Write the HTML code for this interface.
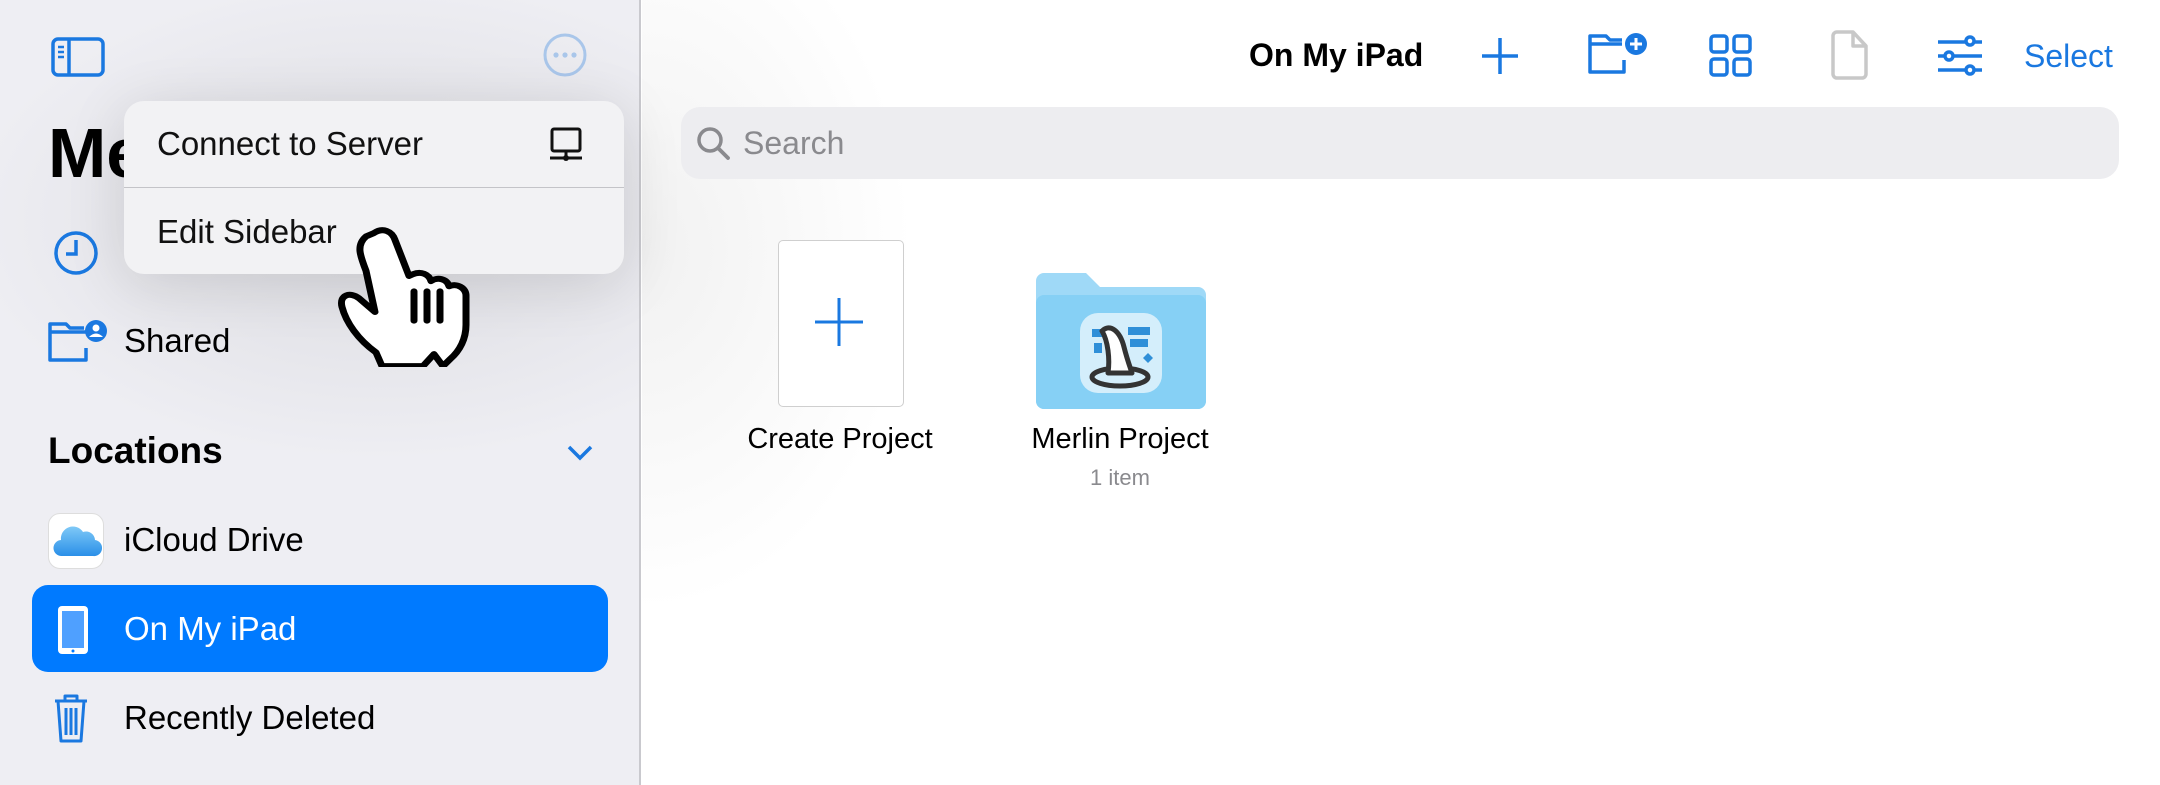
<!DOCTYPE html>
<html><head><meta charset="utf-8"><style>
*{margin:0;padding:0;box-sizing:border-box}
body{width:2160px;height:785px;overflow:hidden;background:#fff;font-family:"Liberation Sans",sans-serif;position:relative}
.a{position:absolute}
.t{position:absolute;white-space:nowrap;line-height:1}
</style></head><body>
<div class="a" style="left:0;top:0;width:641px;height:785px;background:radial-gradient(ellipse 520px 300px at 380px 220px,#dcdce1,#eeeef3 80%);border-right:2px solid #c9c9ce"></div>
<div class="a" style="left:642px;top:0;width:500px;height:785px;background:radial-gradient(ellipse 300px 400px at 0 250px,#f1f1f1,#fff 90%)"></div>

<svg class="a" style="left:50px;top:36px" width="56" height="42" viewBox="0 0 56 42"><rect x="3" y="3" width="50" height="36" rx="5" fill="none" stroke="#1a78e0" stroke-width="3.5"/><line x1="19" y1="3" x2="19" y2="39" stroke="#1a78e0" stroke-width="3.5"/><path d="M8 11h6M8 16h6M8 21h6" stroke="#1a78e0" stroke-width="2.5"/></svg>
<svg class="a" style="left:542px;top:32px" width="46" height="46"><circle cx="23" cy="23" r="20" fill="none" stroke="#a9c6ea" stroke-width="3"/><circle cx="14" cy="23" r="2.6" fill="#a9c6ea"/><circle cx="23" cy="23" r="2.6" fill="#a9c6ea"/><circle cx="32" cy="23" r="2.6" fill="#a9c6ea"/></svg>

<div class="t" style="left:48px;top:118px;font-size:70px;font-weight:bold">Me</div>
<svg class="a" style="left:52px;top:229px" width="48" height="48"><circle cx="24" cy="24" r="20" fill="none" stroke="#1a78e0" stroke-width="3.5"/><path d="M24 11v14h-10" fill="none" stroke="#1a78e0" stroke-width="3.5"/></svg>
<svg class="a" style="left:46px;top:318px" width="64" height="46"><path d="M4 14V6h16l4 4h14M4 14h38M4 14v28h36V30" fill="none" stroke="#1a78e0" stroke-width="3.5" stroke-linejoin="round"/><circle cx="50" cy="13" r="11" fill="#1a78e0"/><circle cx="50" cy="10" r="3.5" fill="#fff"/><path d="M43 19q7-7 14 0" fill="#fff"/></svg>
<div class="t" style="left:124px;top:324px;font-size:33px">Shared</div>

<div class="t" style="left:48px;top:432px;font-size:37px;font-weight:bold">Locations</div>
<svg class="a" style="left:566px;top:443px" width="28" height="18"><path d="M3 4l11 11 11-11" fill="none" stroke="#1a78e0" stroke-width="3.5"/></svg>

<div class="a" style="left:48px;top:513px;width:56px;height:56px;background:#fff;border-radius:12px;border:1px solid #ddd"></div>
<svg class="a" style="left:52px;top:522px" width="50" height="38"><path d="M10 34a8 8 0 0 1-1-16 12 12 0 0 1 22-8 9 9 0 0 1 12 8 8 8 0 0 1-2 16z" fill="url(#g)"/><defs><linearGradient id="g" x1="0" y1="0" x2="0" y2="1"><stop offset="0" stop-color="#7fc9f7"/><stop offset="1" stop-color="#2a8fe8"/></linearGradient></defs></svg>
<div class="t" style="left:124px;top:523px;font-size:33px">iCloud Drive</div>

<div class="a" style="left:32px;top:585px;width:576px;height:87px;background:#007aff;border-radius:16px"></div>
<svg class="a" style="left:56px;top:604px" width="34" height="52"><rect x="2" y="2" width="30" height="48" rx="4" fill="#fff"/><rect x="6" y="7" width="22" height="37" fill="#4fa0ff"/><circle cx="17" cy="47" r="1.5" fill="#007aff"/></svg>
<div class="t" style="left:124px;top:612px;font-size:33px;color:#fff">On My iPad</div>

<svg class="a" style="left:52px;top:692px" width="40" height="52"><path d="M3 9h32M13 9V4h12v5M6 9l3 40h20l3-40M14 16v27M19 16v27M24 16v27" fill="none" stroke="#1a78e0" stroke-width="3" stroke-linejoin="round"/></svg>
<div class="t" style="left:124px;top:701px;font-size:33px">Recently Deleted</div>

<div class="a" style="left:124px;top:101px;width:500px;height:173px;background:#f2f2f4;border-radius:20px;box-shadow:0 10px 60px rgba(0,0,0,.12)"></div>
<div class="a" style="left:124px;top:187px;width:500px;height:1px;background:#c4c4c8"></div>
<div class="t" style="left:157px;top:127px;font-size:33px;color:#111">Connect to Server</div>
<div class="t" style="left:157px;top:215px;font-size:33px;color:#111">Edit Sidebar</div>
<svg class="a" style="left:548px;top:126px" width="36" height="38"><rect x="4" y="3" width="28" height="22" rx="2" fill="none" stroke="#111" stroke-width="3"/><path d="M18 25v7M2 32h32" stroke="#111" stroke-width="3"/><circle cx="18" cy="32" r="3" fill="#111"/></svg>

<svg class="a" style="left:322px;top:221px" width="210" height="146" viewBox="0 0 210 170" preserveAspectRatio="none"><path d="M52 14c9-7 18-2 21 8l14 42 4-2c8-4 16 0 18 8 6-5 16-3 18 6 8-4 17 2 17 11v34c0 16-6 30-16 40l-7 8-9-14-11 14H60l-6-16C36 138 24 118 20 100c-3-14 8-18 17-10l16 16-9-48C38 40 34 28 44 18z" fill="#fff" stroke="#000" stroke-width="7" stroke-linejoin="round"/><path d="M92 82v34M105 82v34M118 82v34" stroke="#000" stroke-width="7" stroke-linecap="round"/></svg>

<div class="t" style="left:1249px;top:39px;font-size:32px;font-weight:bold">On My iPad</div>
<svg class="a" style="left:1480px;top:36px" width="40" height="40"><path d="M20 2v36M2 20h36" stroke="#1a78e0" stroke-width="3.5"/></svg>
<svg class="a" style="left:1586px;top:30px" width="64" height="46"><path d="M4 14V6h16l4 4h12M4 14h32M4 14v28h34V30" fill="none" stroke="#1a78e0" stroke-width="3.5" stroke-linejoin="round"/><circle cx="50" cy="14" r="11" fill="#1a78e0"/><path d="M50 8v12M44 14h12" stroke="#fff" stroke-width="3"/></svg>
<svg class="a" style="left:1709px;top:34px" width="44" height="44"><g fill="none" stroke="#1a78e0" stroke-width="3.5"><rect x="2" y="2" width="16" height="16" rx="3"/><rect x="25" y="2" width="16" height="16" rx="3"/><rect x="2" y="25" width="16" height="16" rx="3"/><rect x="25" y="25" width="16" height="16" rx="3"/></g></svg>
<svg class="a" style="left:1830px;top:30px" width="40" height="50"><path d="M3 6a4 4 0 0 1 4-4h16l13 14v28a4 4 0 0 1-4 4H7a4 4 0 0 1-4-4zM23 2v14h13" fill="none" stroke="#c8c8c8" stroke-width="3.5" stroke-linejoin="round"/></svg>
<svg class="a" style="left:1936px;top:34px" width="48" height="44"><g stroke="#1a78e0" stroke-width="3.5" fill="#fff"><path d="M2 8h44M2 22h44M2 36h44"/><circle cx="34" cy="7" r="4"/><circle cx="13" cy="22" r="4"/><circle cx="34" cy="36" r="4"/></g></svg>
<div class="t" style="left:2024px;top:40px;font-size:32px;color:#1a78e0">Select</div>

<div class="a" style="left:681px;top:107px;width:1438px;height:72px;background:#ededf0;border-radius:19px"></div>
<svg class="a" style="left:696px;top:126px" width="36" height="36"><circle cx="14" cy="14" r="11" fill="none" stroke="#8a8a8e" stroke-width="3.5"/><path d="M22 22l10 10" stroke="#8a8a8e" stroke-width="3.8" stroke-linecap="round"/></svg>
<div class="t" style="left:743px;top:127px;font-size:32px;color:#8a8a8e">Search</div>

<div class="a" style="left:778px;top:240px;width:126px;height:167px;border:1.5px solid #cfcfcf;border-radius:5px;background:#fff"></div>
<svg class="a" style="left:814px;top:297px" width="50" height="50"><path d="M25 1v48M1 25h48" stroke="#1a78e0" stroke-width="3"/></svg>
<div class="t" style="left:740px;top:425px;width:200px;text-align:center;font-size:29px">Create Project</div>

<svg class="a" style="left:1036px;top:273px" width="170" height="136" viewBox="0 0 170 136"><path d="M0 8a8 8 0 0 1 8-8h42l14 14h98a8 8 0 0 1 8 8v106a8 8 0 0 1-8 8H8a8 8 0 0 1-8-8z" fill="#9fd9f7"/><path d="M0 30a8 8 0 0 1 8-8h154a8 8 0 0 1 8 8v98a8 8 0 0 1-8 8H8a8 8 0 0 1-8-8z" fill="#86d0f5"/><rect x="44" y="40" width="82" height="80" rx="18" fill="#d4eefb"/><path d="M56 56h14v8H56zM58 70h8v10h-8zM92 54h22v8H92zM94 66h18v8H94z" fill="#2f8fd8"/><path d="M112 80l5 5-5 5-5-5z" fill="#2f8fd8"/><ellipse cx="84" cy="104" rx="28" ry="9" fill="none" stroke="#333" stroke-width="5"/><path d="M72 100c2-14 0-32-6-42 8-8 18 0 22 16 3 12 6 20 8 26z" fill="#fff" stroke="#333" stroke-width="5" stroke-linejoin="round"/></svg>
<div class="t" style="left:1020px;top:425px;width:200px;text-align:center;font-size:29px">Merlin Project</div>
<div class="t" style="left:1020px;top:467px;width:200px;text-align:center;font-size:22px;color:#8a8a8e">1 item</div>
</body></html>
